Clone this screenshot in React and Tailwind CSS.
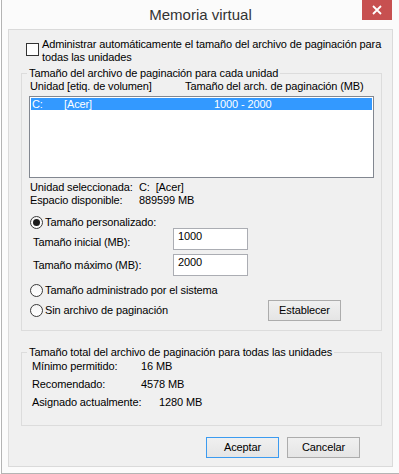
import React from 'react';

function Radio({ checked }) {
  return (
    <span className="flex h-[13px] w-[13px] shrink-0 items-center justify-center rounded-full border border-[#3a3a3a] bg-linear-to-b from-[#f4f4f4] to-[#ffffff]">
      {checked && <span className="h-[7px] w-[7px] rounded-full bg-[#1b1b1b]" />}
    </span>
  );
}

function Button({ children, primary }) {
  return (
    <button
      className={
        'flex h-[21px] w-[73px] items-center justify-center border bg-linear-to-b from-[#f0f0f0] to-[#e5e5e5] ' +
        (primary ? 'border-[#3c9bf0]' : 'border-[#acacac]')
      }
    >
      {children}
    </button>
  );
}

function App() {
  return (
    <div className="h-[474px] w-[399px] overflow-hidden whitespace-nowrap bg-white font-['Liberation_Sans',Arial,sans-serif] text-[11px] leading-[13px] tracking-[-0.12px] text-black">
      <div className="ml-[1px] flex h-[474px] flex-col border-b border-l border-[#b4b4b4] bg-[#fbfbfb]">
        {/* title bar */}
        <div className="relative flex h-[29px] shrink-0 items-center justify-center">
          <span className="text-[15px] leading-[18px] tracking-normal text-[#333333]">Memoria virtual</span>
          <button className="absolute right-[7px] top-0 flex h-[20px] w-[30px] items-center justify-center bg-[#c75050]">
            <svg width="10" height="10" viewBox="0 0 10 10">
              <path d="M1 1 L9 9 M9 1 L1 9" stroke="#fff" strokeWidth="1.8" />
            </svg>
          </button>
        </div>

        {/* client area */}
        <div className="ml-[6px] flex h-[438px] w-[385px] shrink-0 flex-col border border-[#dadada] bg-[#f0f0f0]">
          <div className="mt-[8px] flex items-start pl-[17px]">
            <span className="mt-[5px] h-[13px] w-[13px] shrink-0 border border-[#333333] bg-white" />
            <span className="ml-[3px]">
              Administrar automáticamente el tamaño del archivo de paginación para
              <br />
              todas las unidades
            </span>
          </div>

          <fieldset className="ml-[12px] mr-[10px] mt-[2px] min-w-0 border border-[#dcdcdc] pb-[9px]">
            <legend className="ml-[5px] px-[2px] leading-[14px]">Tamaño del archivo de paginación para cada unidad</legend>
            <div className="flex pl-[8px] leading-[12px]">
              <span className="w-[155px]">Unidad [etiq. de volumen]</span>
              <span>Tamaño del arch. de paginación (MB)</span>
            </div>
            <div className="ml-[7px] mt-[4px] h-[82px] w-[345px] border border-[#828790] bg-white p-[1px]">
              <div className="flex h-[12px] items-center bg-[#3399ff] pl-[1px] leading-[12px] text-white">
                <span className="w-[32px]">C:</span>
                <span className="w-[150px]">[Acer]</span>
                <span>1000 - 2000</span>
              </div>
            </div>
            <div className="mt-[3px] pl-[8px]">
              <div className="flex">
                <span className="w-[109px]">Unidad seleccionada:</span>
                <span>C:&nbsp;&nbsp;[Acer]</span>
              </div>
              <div className="flex">
                <span className="w-[109px]">Espacio disponible:</span>
                <span>889599 MB</span>
              </div>
            </div>

            <div className="mt-[10px] flex h-[11px] items-center pl-[8px]">
              <Radio checked />
              <span className="ml-[2px]">Tamaño personalizado:</span>
            </div>
            <div className="flex h-[22px] items-start pl-[11px]">
              <span className="w-[140px] pt-[8px]">Tamaño inicial (MB):</span>
              <div className="h-[22px] w-[75px] border border-[#abadb3] bg-white pl-[4px] pt-[1px]">1000</div>
            </div>
            <div className="mt-[4px] flex h-[22px] items-start pl-[11px]">
              <span className="w-[140px] pt-[5px]">Tamaño máximo (MB):</span>
              <div className="h-[22px] w-[75px] border border-[#abadb3] bg-white pl-[4px] pt-[1px]">2000</div>
            </div>
            <div className="mt-[8px] flex h-[13px] items-center pl-[8px]">
              <Radio />
              <span className="ml-[2px]">Tamaño administrado por el sistema</span>
            </div>
            <div className="mt-[2px] flex h-[22px] items-center pl-[8px]">
              <div className="flex w-[238px] items-center">
                <Radio />
                <span className="ml-[2px]">Sin archivo de paginación</span>
              </div>
              <Button>Establecer</Button>
            </div>
          </fieldset>

          <fieldset className="ml-[12px] mr-[10px] mt-[14px] min-w-0 border border-[#dcdcdc] pb-[14px]">
            <legend className="ml-[5px] px-[2px] leading-[14px]">Tamaño total del archivo de paginación para todas las unidades</legend>
            <div className="mt-[-2px] flex h-[18px] items-center pl-[10px]">
              <span className="w-[109px]">Mínimo permitido:</span>
              <span>16 MB</span>
            </div>
            <div className="flex h-[18px] items-center pl-[10px]">
              <span className="w-[109px]">Recomendado:</span>
              <span>4578 MB</span>
            </div>
            <div className="flex h-[18px] items-center pl-[10px]">
              <span className="w-[127px]">Asignado actualmente:</span>
              <span>1280 MB</span>
            </div>
          </fieldset>

          <div className="mt-[11px] flex justify-end gap-[8px] pr-[32px]">
            <Button primary>Aceptar</Button>
            <Button>Cancelar</Button>
          </div>
        </div>
      </div>
    </div>
  );
}

export default App;
